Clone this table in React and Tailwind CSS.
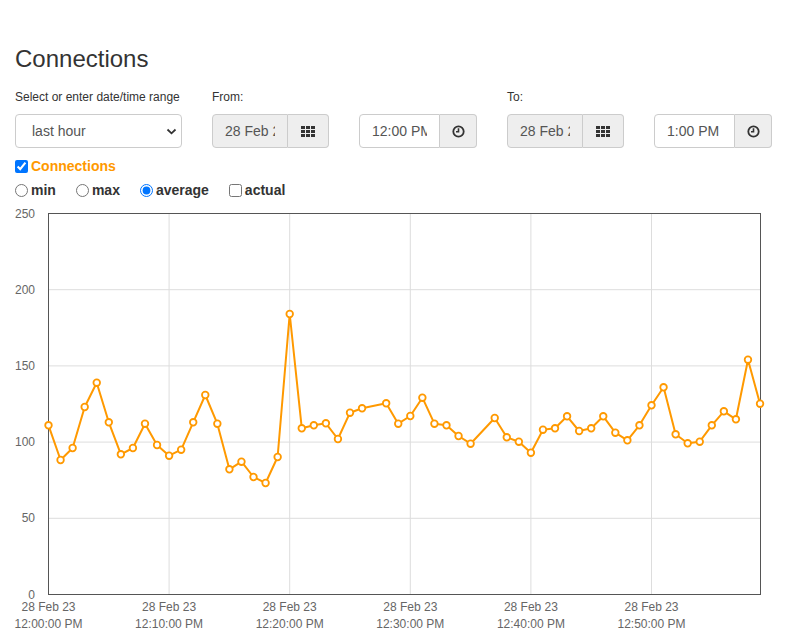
import React from "react";

const ORANGE = "#ff9900";

const pts = [
  [0, 425.3], [1, 460], [2, 448], [3, 407], [4, 382.7], [5, 422.3], [6, 454.3], [7, 448],
  [8, 423.7], [9, 445], [10, 455.7], [11, 449.7], [12, 422.3], [13, 395], [14, 423.7],
  [15, 469.3], [16, 461.7], [17, 477], [18, 483], [19, 457], [20, 314], [21, 428.3],
  [22, 425.3], [23, 423.3], [24, 439], [25, 412.7], [26, 408.3], [28, 403.3], [29, 423.7],
  [30, 416], [31, 397.7], [32, 423.7], [33, 425.3], [34, 436], [35, 443.7], [37, 418],
  [38, 437.3], [39, 441.7], [40, 452.7], [41, 429.7], [42, 428.3], [43, 416.3], [44, 431],
  [45, 428.3], [46, 416.3], [47, 432.7], [48, 440.3], [49, 425.3], [50, 405.3], [51, 387.3],
  [52, 434.3], [53, 443.3], [54, 441.7], [55, 425.3], [56, 411.3], [57, 419.3], [58, 359.7],
  [59, 403.7],
].map(([i, y]) => [48.5 + i * 12.06, y]);

function GridIcon() {
  const rects = [];
  for (let r = 0; r < 3; r++)
    for (let c = 0; c < 3; c++)
      rects.push(<rect key={r + "-" + c} x={c * 5} y={r * 4} width="4" height="3" fill="#333" />);
  return (
    <svg width="14" height="11" viewBox="0 0 14 11">
      {rects}
    </svg>
  );
}

function ClockIcon() {
  return (
    <svg width="13" height="13" viewBox="0 0 13 13">
      <circle cx="6.5" cy="6.5" r="5.2" fill="none" stroke="#333" strokeWidth="1.8" />
      <path d="M6.5 3.2 V6.8 H4" fill="none" stroke="#333" strokeWidth="1.6" />
    </svg>
  );
}

function DateGroup({ value }) {
  return (
    <div className="flex h-[34px] w-[117px]">
      <input
        readOnly
        value={value}
        className="w-[76px] h-full rounded-l-[4px] border border-[#cccccc] bg-[#eeeeee] px-[12px] text-[14px] text-[#555555] outline-none"
      />
      <div className="w-[41px] h-full flex items-center justify-center rounded-r-[4px] border border-l-0 border-[#cccccc] bg-[#eeeeee]">
        <GridIcon />
      </div>
    </div>
  );
}

function TimeGroup({ value }) {
  return (
    <div className="flex h-[34px] w-[118px]">
      <input
        readOnly
        value={value}
        className="w-[81px] h-full rounded-l-[4px] border border-[#cccccc] bg-white px-[12px] text-[14px] text-[#555555] outline-none"
      />
      <div className="w-[37px] h-full flex items-center justify-center rounded-r-[4px] border border-l-0 border-[#cccccc] bg-[#eeeeee]">
        <ClockIcon />
      </div>
    </div>
  );
}

function Chart() {
  const yTicks = [0, 50, 100, 150, 200, 250];
  const yOf = (v) => 594.5 - v * 1.524;
  const xTicks = ["12:00:00 PM", "12:10:00 PM", "12:20:00 PM", "12:30:00 PM", "12:40:00 PM", "12:50:00 PM"];
  const xOf = (k) => 48.5 + k * 120.6;
  const line = pts.map(([x, y], i) => (i === 0 ? "M" : "L") + x.toFixed(1) + " " + y.toFixed(1)).join(" ");
  return (
    <svg width="787" height="434" className="block" style={{ fontFamily: '"Liberation Sans", Arial, sans-serif' }}>
      <g transform="translate(0,-200)">
        {yTicks.slice(1, 5).map((v) => (
          <line key={v} x1="48.5" x2="760.5" y1={yOf(v)} y2={yOf(v)} stroke="#dddddd" strokeWidth="1" />
        ))}
        {[1, 2, 3, 4, 5].map((k) => (
          <line key={k} x1={xOf(k)} x2={xOf(k)} y1="213.5" y2="594.5" stroke="#dddddd" strokeWidth="1" />
        ))}
        <rect x="48.5" y="213.5" width="712" height="381" fill="none" stroke="#555555" strokeWidth="1" />
        {yTicks.map((v) => (
          <text key={v} x="35" y={yOf(v) + 4} textAnchor="end" fontSize="12" fill="#666666">
            {v}
          </text>
        ))}
        {xTicks.map((t, k) => (
          <g key={t}>
            <text x={xOf(k)} y="611" textAnchor="middle" fontSize="12" fill="#666666">
              28 Feb 23
            </text>
            <text x={xOf(k)} y="628" textAnchor="middle" fontSize="12" fill="#666666">
              {t}
            </text>
          </g>
        ))}
        <path d={line} fill="none" stroke={ORANGE} strokeWidth="2" strokeLinejoin="round" />
        {pts.map(([x, y], i) => (
          <circle key={i} cx={x} cy={y} r="3.3" fill="white" stroke={ORANGE} strokeWidth="1.8" />
        ))}
      </g>
    </svg>
  );
}

export default function App() {
  return (
    <div className="w-[787px] h-[634px] overflow-hidden bg-white text-[#333333] font-['Liberation_Sans',Arial,sans-serif]">
      <div className="px-[15px] pt-[46px]">
        <h3 className="text-[24px] leading-[26px] mb-[17px] font-normal">Connections</h3>
        <div className="flex gap-[30px]">
          <div className="flex flex-col w-[167px]">
            <label className="text-[12px] leading-[17px] h-[17px] mb-[8px]">Select or enter date/time range</label>
            <div className="relative h-[34px]">
              <select
                defaultValue="last hour"
                className="appearance-none w-full h-full rounded-[4px] border border-[#cccccc] bg-white pl-[16px] text-[14px] text-[#555555] outline-none"
              >
                <option>last hour</option>
              </select>
              <svg
                className="absolute right-[5px] top-[14px] pointer-events-none"
                width="11"
                height="7"
                viewBox="0 0 11 7"
              >
                <path d="M1.5 1.5 L5.5 5.3 L9.5 1.5" fill="none" stroke="#333" strokeWidth="1.8" />
              </svg>
            </div>
          </div>
          <div className="flex flex-col">
            <label className="text-[12px] leading-[17px] h-[17px] mb-[8px]">From:</label>
            <div className="flex gap-[30px]">
              <DateGroup value="28 Feb 2023" />
              <TimeGroup value="12:00 PM" />
            </div>
          </div>
          <div className="flex flex-col">
            <label className="text-[12px] leading-[17px] h-[17px] mb-[8px]">To:</label>
            <div className="flex gap-[30px]">
              <DateGroup value="28 Feb 2023" />
              <TimeGroup value="1:00 PM" />
            </div>
          </div>
        </div>
        <div className="mt-[8px] h-[20px] flex items-center">
          <label className="flex items-center gap-[3px] text-[14px] font-bold text-[#ff9900]">
            <input type="checkbox" defaultChecked className="w-[13px] h-[13px] m-0" />
            Connections
          </label>
        </div>
        <div className="mt-[4px] h-[20px] flex items-center gap-[20px] text-[14px] font-bold">
          <label className="flex items-center gap-[3px]">
            <input type="radio" name="agg" className="w-[13px] h-[13px] m-0" />
            min
          </label>
          <label className="flex items-center gap-[3px]">
            <input type="radio" name="agg" className="w-[13px] h-[13px] m-0" />
            max
          </label>
          <label className="flex items-center gap-[3px]">
            <input type="radio" name="agg" defaultChecked className="w-[13px] h-[13px] m-0" />
            average
          </label>
          <label className="flex items-center gap-[3px]">
            <input type="checkbox" className="w-[13px] h-[13px] m-0" />
            actual
          </label>
        </div>
      </div>
      <Chart />
    </div>
  );
}
